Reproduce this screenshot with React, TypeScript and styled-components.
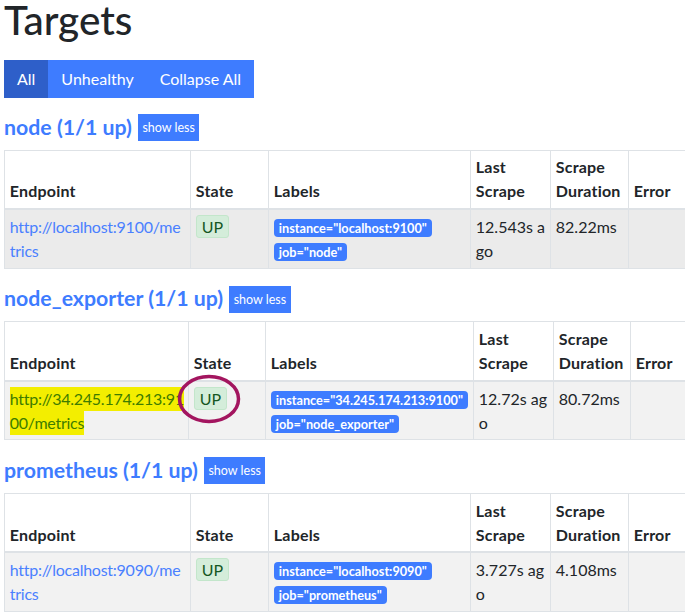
import React from "react";
import styled, { createGlobalStyle } from "styled-components";

const GlobalStyle = createGlobalStyle`
  html, body {
    margin: 0;
    padding: 0;
    background: #ffffff;
    overflow: hidden;
  }
  body {
    font-family: Lato, "Noto Sans", Arial, sans-serif;
    font-size: 16px;
    line-height: 1.5;
    color: #212529;
  }
  * { box-sizing: border-box; }
`;

const Page = styled.div`
  padding: 0 4px;
  width: 760px;
`;

const Title = styled.h1`
  font-size: 40.5px;
  font-weight: 500;
  line-height: 40px;
  margin: 0 0 20px 0;
`;

const ButtonGroup = styled.div`
  display: inline-flex;
  margin-bottom: 16px;
`;

const GroupButton = styled.button<{ $active?: boolean }>`
  font-family: inherit;
  font-size: 16px;
  line-height: 24px;
  padding: 7px 13px;
  border: none;
  color: #ffffff;
  background: ${(p) => (p.$active ? "#2e5fc9" : "#3e7cff")};
  cursor: pointer;
`;

const Section = styled.section`
  margin-bottom: 17px;
`;

const PoolHeader = styled.div`
  display: flex;
  align-items: center;
  gap: 6px;
  height: 27px;
  margin-bottom: 8.5px;
`;

const PoolTitle = styled.a`
  font-size: 21.3px;
  font-weight: 700;
  color: #3e7cff;
  text-decoration: none;
`;

const SmallButton = styled.button`
  font-family: inherit;
  font-size: 12.5px;
  line-height: 19px;
  padding: 4px 4.5px;
  border: none;
  color: #ffffff;
  background: #3e7cff;
`;

const Table = styled.table<{ $width: number }>`
  border-collapse: collapse;
  table-layout: fixed;
  width: ${(p) => p.$width}px;
`;

const HeadCell = styled.th`
  text-align: left;
  vertical-align: bottom;
  font-weight: 700;
  padding: 4.8px;
  border: 1px solid #dee2e6;
  border-bottom: 2px solid #dee2e6;
  line-height: 24px;
  letter-spacing: 0.2px;
`;

const Row = styled.tr<{ $shade: string }>`
  background: ${(p) => p.$shade};
`;

const Cell = styled.td`
  vertical-align: top;
  padding: 4.8px;
  border: 1px solid #dee2e6;
  line-height: 24px;
  word-break: break-all;
  position: relative;
`;

const EndpointLink = styled.a`
  display: block;
  color: #4a80ff;
  text-decoration: none;
  letter-spacing: -0.25px;
`;

const EndpointLine = styled.span<{ $marked?: boolean }>`
  display: block;
  width: fit-content;
  white-space: nowrap;
  color: ${(p) => (p.$marked ? "#3e7c00" : "inherit")};
  background: ${(p) => (p.$marked ? "#f3ee00" : "transparent")};
`;

const StateBadge = styled.span`
  display: inline-block;
  line-height: 21px;
  padding: 0 5px;
  color: #155724;
  background: #d4edda;
  border: 1px solid #c3e6cb;
  border-radius: 3px;
`;

const LabelBadge = styled.span`
  display: inline-block;
  font-size: 12.7px;
  font-weight: 700;
  line-height: 12px;
  padding: 3px 5px;
  margin-right: 4px;
  color: #ffffff;
  background: #3e7cff;
  border-radius: 4px;
  white-space: nowrap;
  word-break: normal;
`;

const Circle = styled.svg`
  position: absolute;
  left: -11px;
  top: -7px;
  width: 62px;
  height: 48px;
  overflow: visible;
  pointer-events: none;
`;

type Pool = {
  name: string;
  endpoint: string;
  wrapAt: number;
  marked?: boolean;
  labels: string[];
  lastScrape: string;
  duration: string;
  widths: number[];
  shade: string;
};

const pools: Pool[] = [
  {
    name: "node",
    endpoint: "http://localhost:9100/metrics",
    wrapAt: 24,
    labels: ['instance="localhost:9100"', 'job="node"'],
    lastScrape: "12.543s ago",
    duration: "82.22ms",
    widths: [186, 78, 202, 80, 78, 90],
    shade: "#ebebeb",
  },
  {
    name: "node_exporter",
    endpoint: "http://34.245.174.213:9100/metrics",
    wrapAt: 24,
    marked: true,
    labels: ['instance="34.245.174.213:9100"', 'job="node_exporter"'],
    lastScrape: "12.72s ago",
    duration: "80.72ms",
    widths: [184, 77, 208, 80, 77, 90],
    shade: "#f2f2f2",
  },
  {
    name: "prometheus",
    endpoint: "http://localhost:9090/metrics",
    wrapAt: 24,
    labels: ['instance="localhost:9090"', 'job="prometheus"'],
    lastScrape: "3.727s ago",
    duration: "4.108ms",
    widths: [186, 78, 202, 80, 78, 90],
    shade: "#f2f2f2",
  },
];

function PoolSection({ pool }: { pool: Pool }) {
  const lines = [pool.endpoint.slice(0, pool.wrapAt), pool.endpoint.slice(pool.wrapAt)];
  const total = pool.widths.reduce((a, b) => a + b, 0);
  return (
    <Section>
      <PoolHeader>
        <PoolTitle href="#">{pool.name} (1/1 up)</PoolTitle>
        <SmallButton>show less</SmallButton>
      </PoolHeader>
      <Table $width={total}>
        <colgroup>
          {pool.widths.map((w, i) => (
            <col key={i} style={{ width: w }} />
          ))}
        </colgroup>
        <thead>
          <tr>
            <HeadCell>Endpoint</HeadCell>
            <HeadCell>State</HeadCell>
            <HeadCell>Labels</HeadCell>
            <HeadCell>Last Scrape</HeadCell>
            <HeadCell>Scrape Duration</HeadCell>
            <HeadCell>Error</HeadCell>
          </tr>
        </thead>
        <tbody>
          <Row $shade={pool.shade}>
            <Cell>
              <EndpointLink href="#">
                {lines.map((l, i) => (
                  <EndpointLine key={i} $marked={pool.marked}>
                    {l}
                  </EndpointLine>
                ))}
              </EndpointLink>
            </Cell>
            <Cell>
              <StateBadge>UP</StateBadge>
              {pool.marked && (
                <Circle viewBox="0 0 62 48">
                  <ellipse
                    cx="31"
                    cy="24"
                    rx="29.5"
                    ry="22.5"
                    fill="none"
                    stroke="#a3155f"
                    strokeWidth="3.5"
                  />
                </Circle>
              )}
            </Cell>
            <Cell>
              {pool.labels.map((l) => (
                <LabelBadge key={l}>{l}</LabelBadge>
              ))}
            </Cell>
            <Cell>{pool.lastScrape}</Cell>
            <Cell>{pool.duration}</Cell>
            <Cell></Cell>
          </Row>
        </tbody>
      </Table>
    </Section>
  );
}

export default function App() {
  return (
    <>
      <GlobalStyle />
      <Page>
        <Title>Targets</Title>
        <ButtonGroup>
          <GroupButton $active>All</GroupButton>
          <GroupButton>Unhealthy</GroupButton>
          <GroupButton>Collapse All</GroupButton>
        </ButtonGroup>
        {pools.map((p) => (
          <PoolSection key={p.name} pool={p} />
        ))}
      </Page>
    </>
  );
}
